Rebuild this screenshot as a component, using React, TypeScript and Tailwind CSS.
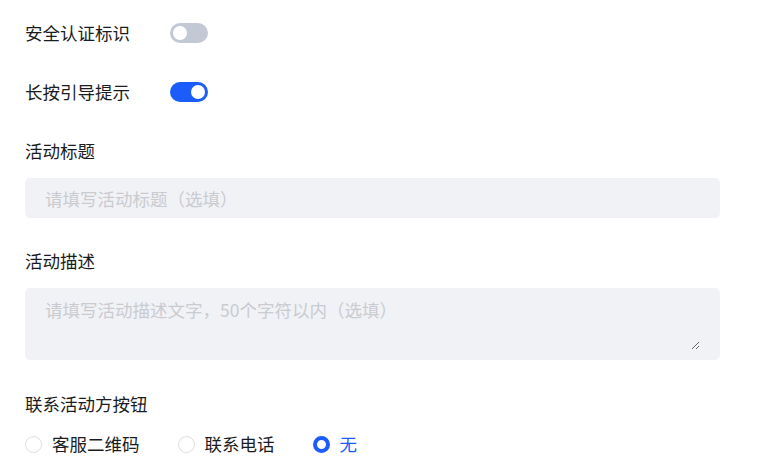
import React, { useState } from 'react';

const font = { fontFamily: '"Noto Sans CJK SC", "Noto Sans", sans-serif' };

const Toggle: React.FC<{ on: boolean; onChange: () => void }> = ({ on, onChange }) => (
  <button
    onClick={onChange}
    className={`relative w-[38px] h-[20px] rounded-full transition-colors ${on ? 'bg-[#1b5cfb]' : 'bg-[#c2c9d4]'}`}
  >
    <span
      className={`absolute top-[3px] w-[14px] h-[14px] rounded-full bg-white transition-all ${on ? 'left-[21px]' : 'left-[3px]'}`}
    />
  </button>
);

export default function App() {
  const [auth, setAuth] = useState(false);
  const [guide, setGuide] = useState(true);
  const [contact, setContact] = useState('none');

  const options = [
    { value: 'qr', label: '客服二维码' },
    { value: 'phone', label: '联系电话' },
    { value: 'none', label: '无' },
  ];

  return (
    <div className="min-h-screen bg-white px-[25px] pt-[21px] text-[17.5px] text-[#1a1c21]" style={font}>
      <div className="w-[695px] flex flex-col">
        {/* Toggles */}
        <div className="flex items-center h-[24px]">
          <span className="w-[145px] leading-[24px]">安全认证标识</span>
          <Toggle on={auth} onChange={() => setAuth(!auth)} />
        </div>
        <div className="flex items-center h-[24px] mt-[35px]">
          <span className="w-[145px] leading-[24px]">长按引导提示</span>
          <Toggle on={guide} onChange={() => setGuide(!guide)} />
        </div>

        {/* Title */}
        <div className="mt-[35px] leading-[24px]">活动标题</div>
        <input
          className="mt-[15px] h-[40px] w-full rounded-[5px] bg-[#f1f2f5] px-[20px] text-[17.5px] outline-none placeholder:text-[#c9cbd1]"
          placeholder="请填写活动标题（选填）"
          style={font}
        />

        {/* Description */}
        <div className="mt-[31px] leading-[24px]">活动描述</div>
        <div className="mt-[15px] h-[72px] w-full rounded-[5px] bg-[#f1f2f5] px-[20px] py-[10px]">
          <textarea
            className="block h-[52px] w-full bg-transparent text-[17.5px] leading-[24px] outline-none placeholder:text-[#c9cbd1]"
            placeholder="请填写活动描述文字，50个字符以内（选填）"
            style={font}
          />
        </div>

        {/* Contact */}
        <div className="mt-[32px] leading-[24px]">联系活动方按钮</div>
        <div className="mt-[16px] flex items-center gap-[38px] h-[24px]">
          {options.map((o) => {
            const active = contact === o.value;
            return (
              <label key={o.value} className="flex items-center gap-[10px] cursor-pointer" onClick={() => setContact(o.value)}>
                <span
                  className={`w-[17px] h-[17px] rounded-full bg-white ${active ? 'border-[4px] border-[#1b5cfb]' : 'border border-[#dcdee2]'}`}
                />
                <span className={`leading-[24px] ${active ? 'text-[#1b5cfb]' : ''}`}>{o.label}</span>
              </label>
            );
          })}
        </div>
      </div>
    </div>
  );
}
